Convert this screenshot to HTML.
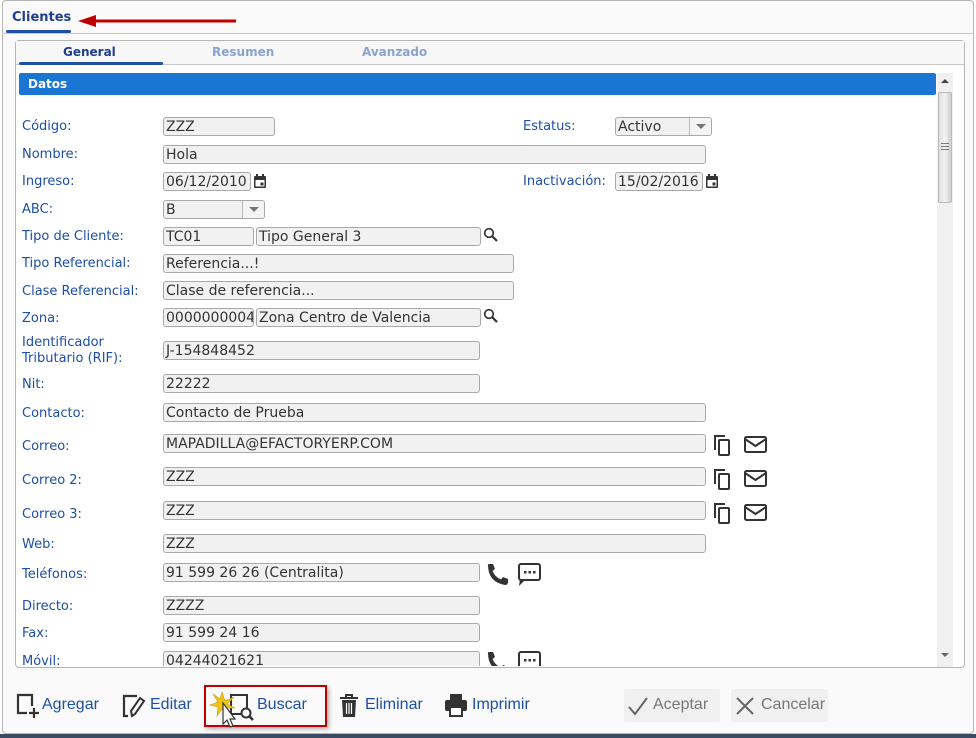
<!DOCTYPE html>
<html style="overflow:hidden"><head><meta charset="utf-8"><style>
*{box-sizing:border-box;margin:0;padding:0}
html,body{width:976px;height:738px;overflow:hidden}
body{background:#fff;font-family:"DejaVu Sans",Verdana,sans-serif;position:relative}
.a{position:absolute}
.lbl{position:absolute;left:22px;font-size:13px;color:#1e4fa5;line-height:16px}
.in{position:absolute;height:19px;background:#f1f1f1;border:1px solid #a9a9a9;border-radius:3px;font-size:14px;color:#333;line-height:18px;padding-left:2px;white-space:nowrap;overflow:hidden}
.sel .ar{position:absolute;right:0;top:0;width:22px;height:17px;border-left:1px solid #bbb;background:#f4f4f4}
.sel .ar:after{content:"";position:absolute;left:6px;top:6px;border:5px solid transparent;border-top:5px solid #777;border-bottom:0}
.tb{position:absolute;top:696px;font-family:"Liberation Sans",Arial,sans-serif;font-size:16px;color:#1e4fa5}
</style></head><body>
<div class="a" style="left:2px;top:0;width:972px;height:734px;border:1px solid #b5b5b5;border-radius:4px;background:#fafafa"></div>
<div class="a" style="left:2px;top:33px;width:972px;height:1px;background:#c8c8c8"></div>
<div class="a" style="left:12px;top:10px;font-size:13px;font-weight:bold;color:#1e3f8f">Clientes</div>
<div class="a" style="left:6px;top:30px;width:65px;height:3px;background:#1f4fa5;border-radius:2px"></div>
<svg class="a" style="left:74px;top:12px" width="166" height="20"><path d="M162 9 L20 9" stroke="#c00000" stroke-width="3"/><path d="M4 9 L22 3 L22 15 Z" fill="#c00000"/></svg>
<div class="a" style="left:15px;top:40px;width:950px;height:628px;border:1px solid #b5b5b5;border-radius:4px;background:#fff"></div>
<div class="a" style="left:16px;top:41px;width:948px;height:24px;background:#f7f7f7;border-bottom:1px solid #c8c8c8"></div>
<div class="a" style="left:63px;top:45px;font-size:12px;font-weight:bold;color:#1e3f8f">General</div>
<div class="a" style="left:212px;top:45px;font-size:12px;font-weight:bold;color:#8aa4cf">Resumen</div>
<div class="a" style="left:362px;top:45px;font-size:12px;font-weight:bold;color:#8aa4cf">Avanzado</div>
<div class="a" style="left:19px;top:62px;width:144px;height:3px;background:#1f4fa5;border-radius:2px"></div>
<div class="a" style="left:19px;top:73px;width:917px;height:22px;background:#1a76d2;border-radius:2px"></div>
<div class="a" style="left:28px;top:77px;font-size:12px;font-weight:bold;color:#fff">Datos</div>
<div class="a" style="left:937px;top:73px;width:16px;height:594px;background:#f0f0f0"></div>
<div class="a" style="left:938px;top:92px;width:14px;height:111px;background:linear-gradient(90deg,#ddd,#f4f4f4,#ccc);border:1px solid #bbb;border-radius:2px"></div>
<div class="a" style="left:941px;top:143px;width:8px;height:7px;border-top:1px solid #777;border-bottom:1px solid #777"></div>
<div class="a" style="left:941px;top:146px;width:8px;height:1px;background:#777"></div>
<div class="a" style="left:941px;top:79px;border:4px solid transparent;border-bottom:4px solid #444;border-top:0"></div>
<div class="a" style="left:941px;top:653px;border:4px solid transparent;border-top:4px solid #666;border-bottom:0"></div>

<div class="a" style="left:16px;top:96px;width:920px;height:570px;overflow:hidden">
<div style="position:absolute;left:-16px;top:-96px;width:976px;height:700px">
<div class="lbl" style="top:119px">Código:</div><div class="in" style="left:163px;top:117px;width:112px">ZZZ</div>
<div class="lbl" style="left:523px;top:119px">Estatus:</div><div class="in sel" style="left:615px;top:117px;width:97px">Activo<span class="ar"></span></div>
<div class="lbl" style="top:147px">Nombre:</div><div class="in" style="left:163px;top:145px;width:543px">Hola</div>
<div class="lbl" style="top:174px">Ingreso:</div><div class="in" style="left:163px;top:172px;width:88px">06/12/2010</div>
<svg class="a" style="left:252px;top:173px" width="16" height="17" viewBox="0 0 16 17"><rect x="2" y="3" width="12" height="12" rx="1" fill="#333"/><rect x="3.5" y="7" width="9" height="6.5" fill="#fff"/><rect x="4" y="1" width="2" height="3" fill="#333"/><rect x="10" y="1" width="2" height="3" fill="#333"/><rect x="8.5" y="9.5" width="3" height="3" fill="#333"/></svg>
<div class="lbl" style="left:523px;top:174px">Inactivación:</div><div class="in" style="left:615px;top:172px;width:88px">15/02/2016</div>
<svg class="a" style="left:704px;top:173px" width="16" height="17" viewBox="0 0 16 17"><rect x="2" y="3" width="12" height="12" rx="1" fill="#333"/><rect x="3.5" y="7" width="9" height="6.5" fill="#fff"/><rect x="4" y="1" width="2" height="3" fill="#333"/><rect x="10" y="1" width="2" height="3" fill="#333"/><rect x="8.5" y="9.5" width="3" height="3" fill="#333"/></svg>
<div class="lbl" style="top:202px">ABC:</div><div class="in sel" style="left:163px;top:200px;width:102px">B<span class="ar"></span></div>
<div class="lbl" style="top:229px">Tipo de Cliente:</div><div class="in" style="left:163px;top:227px;width:91px">TC01</div><div class="in" style="left:256px;top:227px;width:225px">Tipo General 3</div>
<svg class="a" style="left:483px;top:227px" width="16" height="16"><circle cx="6" cy="6" r="4.3" fill="none" stroke="#333" stroke-width="1.7"/><path d="M9 9 L14 14" stroke="#333" stroke-width="2.2"/></svg>
<div class="lbl" style="top:256px">Tipo Referencial:</div><div class="in" style="left:163px;top:254px;width:351px">Referencia...!</div>
<div class="lbl" style="top:284px">Clase Referencial:</div><div class="in" style="left:163px;top:281px;width:351px">Clase de referencia...</div>
<div class="lbl" style="top:311px">Zona:</div><div class="in" style="left:163px;top:308px;width:91px">0000000004</div><div class="in" style="left:256px;top:308px;width:225px">Zona Centro de Valencia</div>
<svg class="a" style="left:483px;top:308px" width="16" height="16"><circle cx="6" cy="6" r="4.3" fill="none" stroke="#333" stroke-width="1.7"/><path d="M9 9 L14 14" stroke="#333" stroke-width="2.2"/></svg>
<div class="lbl" style="top:335px">Identificador<br>Tributario (RIF):</div><div class="in" style="left:163px;top:341px;width:317px">J-154848452</div>
<div class="lbl" style="top:377px">Nit:</div><div class="in" style="left:163px;top:374px;width:317px">22222</div>
<div class="lbl" style="top:406px">Contacto:</div><div class="in" style="left:163px;top:403px;width:543px">Contacto de Prueba</div>
<div class="lbl" style="top:439px">Correo:</div><div class="in" style="left:163px;top:434px;width:543px">MAPADILLA@EFACTORYERP.COM</div>
<div class="lbl" style="top:473px">Correo 2:</div><div class="in" style="left:163px;top:467px;width:543px">ZZZ</div>
<div class="lbl" style="top:507px">Correo 3:</div><div class="in" style="left:163px;top:501px;width:543px">ZZZ</div>
<svg class="a" style="left:712px;top:433px" width="60" height="100">
<g fill="none" stroke="#333" stroke-width="2">
<path d="M3 17 V3 H13"/><rect x="7" y="7" width="10" height="15" rx="1"/><rect x="33" y="4" width="21" height="15" rx="1.5"/><path d="M33 6 L43.5 13 L54 6"/>
<g transform="translate(0,34)"><path d="M3 17 V3 H13"/><rect x="7" y="7" width="10" height="15" rx="1"/><rect x="33" y="4" width="21" height="15" rx="1.5"/><path d="M33 6 L43.5 13 L54 6"/></g>
<g transform="translate(0,68)"><path d="M3 17 V3 H13"/><rect x="7" y="7" width="10" height="15" rx="1"/><rect x="33" y="4" width="21" height="15" rx="1.5"/><path d="M33 6 L43.5 13 L54 6"/></g>
</g></svg>
<div class="lbl" style="top:537px">Web:</div><div class="in" style="left:163px;top:534px;width:543px">ZZZ</div>
<div class="lbl" style="top:567px">Teléfonos:</div><div class="in" style="left:163px;top:563px;width:317px">91 599 26 26 (Centralita)</div>
<svg class="a" style="left:485px;top:562px" width="60" height="26"><path d="M3 3 Q2 2 5 2 L8 2 L10 7 L7.5 9 Q10 15 16 17.5 L18 15 L23 17 L23 20 Q23 23 20 23 Q3 20 3 3 Z" fill="#333"/><rect x="34" y="2" width="21" height="16" rx="2" fill="none" stroke="#333" stroke-width="2"/><path d="M35 17 L34 24 L40 18" fill="#333"/><rect x="39" y="9" width="2.5" height="2.5" fill="#333"/><rect x="43.5" y="9" width="2.5" height="2.5" fill="#333"/><rect x="48" y="9" width="2.5" height="2.5" fill="#333"/></svg>
<div class="lbl" style="top:599px">Directo:</div><div class="in" style="left:163px;top:596px;width:317px">ZZZZ</div>
<div class="lbl" style="top:626px">Fax:</div><div class="in" style="left:163px;top:623px;width:317px">91 599 24 16</div>
<div class="lbl" style="top:654px">Móvil:</div><div class="in" style="left:163px;top:651px;width:317px">04244021621</div>
<svg class="a" style="left:485px;top:650px" width="60" height="26"><path d="M3 3 Q2 2 5 2 L8 2 L10 7 L7.5 9 Q10 15 16 17.5 L18 15 L23 17 L23 20 Q23 23 20 23 Q3 20 3 3 Z" fill="#333"/><rect x="34" y="2" width="21" height="16" rx="2" fill="none" stroke="#333" stroke-width="2"/><rect x="39" y="9" width="2.5" height="2.5" fill="#333"/><rect x="43.5" y="9" width="2.5" height="2.5" fill="#333"/><rect x="48" y="9" width="2.5" height="2.5" fill="#333"/></svg>
</div></div>

<svg class="a" style="left:14px;top:692px" width="28" height="28"><path d="M13 21 H4 V3 H18 V14" fill="none" stroke="#333" stroke-width="2.2"/><path d="M20 16 V26 M15 21 H25" stroke="#333" stroke-width="2.2"/></svg>
<div class="tb" style="left:42px">Agregar</div>
<svg class="a" style="left:120px;top:692px" width="28" height="28"><path d="M17 4 H4 V24 H8" fill="none" stroke="#333" stroke-width="2.2"/><path d="M12 24 L11 19 L20 6 L24 9 L15 22 Z" fill="none" stroke="#333" stroke-width="2"/></svg>
<div class="tb" style="left:150px">Editar</div>
<div class="a" style="left:204px;top:685px;width:123px;height:42px;border:2px solid #c00000;box-shadow:2px 2px 4px rgba(0,0,0,.3)"></div>
<svg class="a" style="left:208px;top:690px" width="50" height="42"><rect x="23" y="5" width="16" height="19" fill="none" stroke="#333" stroke-width="2"/><circle cx="38" cy="23" r="4.5" fill="#fff" stroke="#333" stroke-width="2"/><path d="M41 26 L45 30" stroke="#333" stroke-width="2.5"/><path d="M14 2 L17 11 L26 7 L19 14 L27 18 L18 18 L19 27 L14 19 L9 26 L10 17 L2 15 L10 12 L5 4 L12 9 Z" fill="#f2c418" stroke="#c89a00" stroke-width=".6"/><path d="M15 13 L15 34 L19 30 L22 37 L25 36 L22 29 L27 29 Z" fill="#fff" stroke="#333" stroke-width="1.2"/></svg>
<div class="tb" style="left:257px">Buscar</div>
<svg class="a" style="left:337px;top:693px" width="24" height="26"><path d="M3 5 H21 M9 5 V2 H15 V5" fill="none" stroke="#333" stroke-width="2"/><path d="M5 7 H19 L18 24 H6 Z" fill="#333"/><path d="M9.5 10 V21 M12 10 V21 M14.5 10 V21" stroke="#fff" stroke-width="1.2"/></svg>
<div class="tb" style="left:365px">Eliminar</div>
<svg class="a" style="left:443px;top:692px" width="26" height="26"><rect x="7" y="2" width="12" height="6" fill="#333"/><rect x="2" y="8" width="22" height="11" rx="2" fill="#333"/><rect x="7" y="15" width="12" height="9" fill="#fff" stroke="#333" stroke-width="2"/></svg>
<div class="tb" style="left:472px">Imprimir</div>
<div class="a" style="left:624px;top:689px;width:96px;height:33px;background:#f0f0f0;border-radius:2px"></div>
<svg class="a" style="left:627px;top:695px" width="22" height="22"><path d="M2 12 L8 19 L20 3" fill="none" stroke="#666" stroke-width="2"/></svg>
<div class="tb" style="left:653px;color:#777">Aceptar</div>
<div class="a" style="left:731px;top:689px;width:97px;height:33px;background:#f0f0f0;border-radius:2px"></div>
<svg class="a" style="left:734px;top:695px" width="22" height="22"><path d="M3 3 L19 19 M19 3 L3 19" stroke="#666" stroke-width="2"/></svg>
<div class="tb" style="left:761px;color:#777">Cancelar</div>
<div class="a" style="left:0;top:734px;width:976px;height:4px;background:#3a4a60"></div>
</body></html>
